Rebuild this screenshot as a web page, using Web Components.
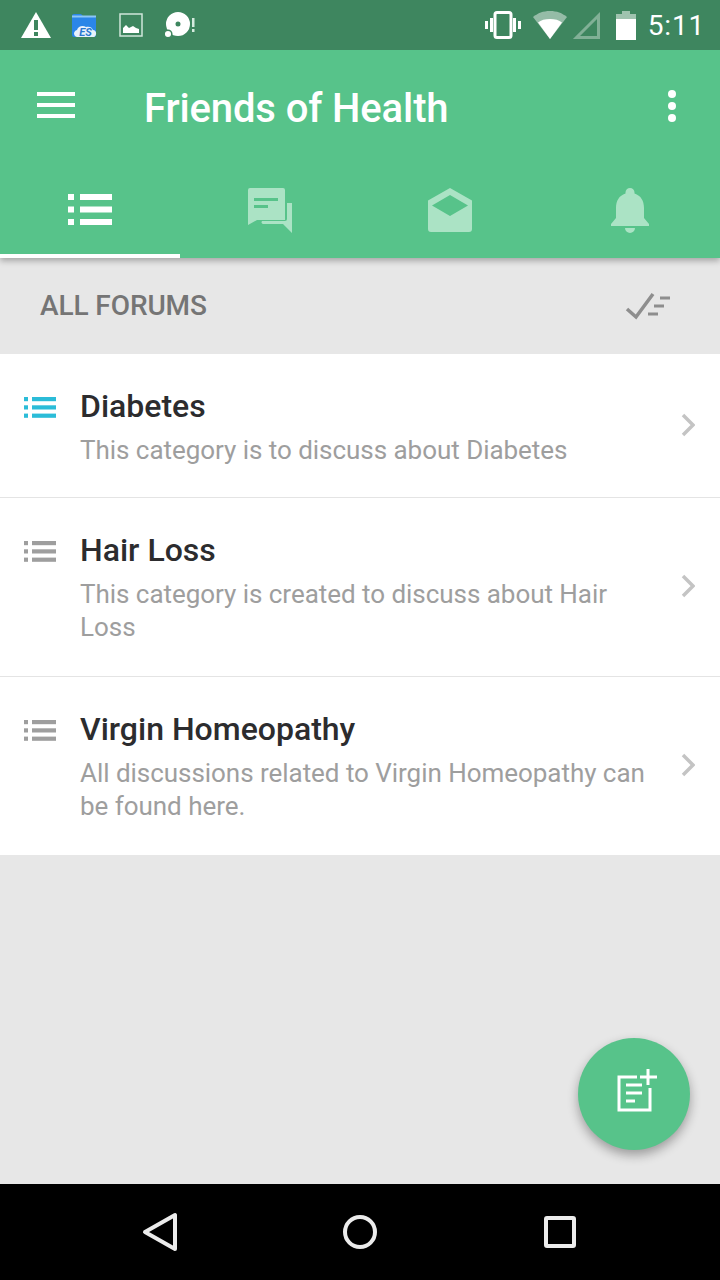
<!DOCTYPE html>
<html><head><meta charset="utf-8"><title>Friends of Health</title>
<style>html,body{margin:0;padding:0;background:#e7e7e7}body{font-family:Roboto,"Liberation Sans",sans-serif}</style>
</head><body>
<x-app></x-app>
<script>
function def(name, css, html){
  customElements.define(name, class extends HTMLElement{
    connectedCallback(){
      if(this.shadowRoot) return;
      const r=this.attachShadow({mode:'open'});
      const t=document.createElement('template');
      t.innerHTML='<style>'+css+'</style>'+(typeof html==='function'?html(this):html);
      r.appendChild(t.content.cloneNode(true));
    }
  });
}
const tabList=`<svg width="44" height="31" viewBox="0 0 44 31" fill="#fff"><rect width="6" height="6"/><rect y="12.500" width="6" height="6"/><rect y="25" width="6" height="6"/><rect x="12" width="32" height="6"/><rect x="12" y="12.500" width="32" height="6"/><rect x="12" y="25" width="32" height="6"/></svg>`;
const rowList=c=>`<svg width="32" height="21" viewBox="0 0 32 21" fill="${c}"><rect width="4" height="4.200"/><rect y="8.300" width="4" height="4.200"/><rect y="16.600" width="4" height="4.200"/><rect x="8" width="24" height="4.200"/><rect x="8" y="8.300" width="24" height="4.200"/><rect x="8" y="16.600" width="24" height="4.200"/></svg>`;

def('x-status-bar',`:host{display:flex;align-items:center;height:50px;background:#3e865f;color:#fff;font:400 28px Roboto,sans-serif}
.l{display:flex;align-items:center;margin-left:20px}.r{display:flex;align-items:center;margin-left:auto;margin-right:15px}svg{display:block}
.t{margin-left:12px;letter-spacing:.8px;line-height:50px;position:relative;top:1px}`,`
<div class="l">
<svg width="32" height="28" viewBox="0 0 32 28"><path fill="#fff" d="M16 1 31 27H1Z"/><rect x="14" y="9" width="4" height="10" fill="#3e865f"/><rect x="14" y="21" width="4" height="4" fill="#3e865f"/></svg>
<svg style="margin-left:19px" width="26" height="26" viewBox="0 0 26 26"><path fill="#2a86e8" d="M1 4a2 2 0 0 1 2-2h7l2 2h11a2 2 0 0 1 2 2v17a2 2 0 0 1-2 2H3a2 2 0 0 1-2-2Z"/><rect x="1" y="3.500" width="24" height="2" fill="#8cc6f5"/><path fill="#e8f2fb" d="M6 25c-4-1-4-6 0-7 1-4 6-5 9-3 3-1 6 0 7 3 4 0 4 6 1 7Z"/><text x="14.500" y="24" text-anchor="middle" font-family="Roboto,sans-serif" font-weight="700" font-style="italic" font-size="11" fill="#2a78d0">ES</text></svg>
<svg style="margin-left:22px" width="24" height="24" viewBox="0 0 24 24"><rect x="1" y="1" width="22" height="22" fill="none" stroke="#cfe6da" stroke-width="1.500"/><path fill="#fff" d="M4 20v-5l3-3 3 3 4-2 3 2 3 1v4Z"/></svg>
<svg style="margin-left:21px" width="32" height="26" viewBox="0 0 32 26"><path fill="#fff" fill-rule="evenodd" d="M14 0a12 12 0 1 1 0 24 12 12 0 0 1 0-24Zm0 9.500a2.500 2.500 0 1 0 0 5 2.500 2.500 0 0 0 0-5Z"/><circle cx="4" cy="22" r="3.800" fill="#fff" stroke="#3e865f" stroke-width="1.500"/><rect x="28" y="6" width="2.500" height="9" fill="#d5ebdf"/><rect x="28" y="17" width="2.500" height="3" fill="#d5ebdf"/></svg>
</div>
<div class="r">
<svg width="36" height="28" viewBox="0 0 36 28"><rect x="10" y="1.500" width="16" height="25" rx="2" fill="none" stroke="#fff" stroke-width="3"/><rect x="5" y="7" width="3" height="14" fill="#fff"/><rect x="28" y="7" width="3" height="14" fill="#fff"/><rect x="0" y="10" width="3" height="8" fill="#fff"/><rect x="33" y="10" width="3" height="8" fill="#fff"/></svg>
<svg style="margin-left:12px" width="34" height="28" viewBox="0 0 34 28"><path fill="#fff" fill-opacity=".45" d="M17 0C10 0 5 2 0 6l17 22L34 6C29 2 24 0 17 0Z"/><path fill="#fff" d="M5 11.500C8 9 12 8 17 8s9 1 12 3.500L17 28Z"/></svg>
<svg style="margin-left:5px" width="28" height="28" viewBox="0 0 28 28"><path fill="none" stroke="#fff" stroke-opacity=".35" stroke-width="3" d="M26.500 4.500V26.500H4.500Z"/></svg>
<svg style="margin-left:16px" width="20" height="29" viewBox="0 0 20 29"><path fill="#fff" fill-opacity=".5" d="M6 0h8v3h6v6H0V3h6Z"/><rect y="8" width="20" height="21" fill="#fff"/></svg>
<span class="t">5:11</span>
</div>`);

def('x-app-bar',`:host{display:flex;align-items:flex-start;height:115px;background:#57c38a;color:#fff}
.m{width:38px;margin:42px 0 0 37px;display:flex;flex-direction:column;gap:7px}.m i{display:block;height:4px;background:#fff}
.t{margin-left:69px;margin-top:34px;font:500 40px/50px Roboto,sans-serif;letter-spacing:-.12px;white-space:nowrap}
.d{margin-left:auto;margin-right:44px;margin-top:40px;display:flex;flex-direction:column;gap:4px}.d i{display:block;width:8px;height:8px;border-radius:50%;background:#fff}`,
`<div class="m"><i></i><i></i><i></i></div><div class="t">Friends of Health</div><div class="d"><i></i><i></i><i></i></div>`);

def('x-tabs',`:host{display:flex;height:93px;background:#57c38a;position:relative;z-index:2;box-shadow:0 3px 6px rgba(0,0,0,.28);clip-path:inset(0 0 -20px 0)}
.tab{flex:1;display:flex;justify-content:center;padding-top:23px;box-sizing:border-box;border-bottom:4px solid transparent}.tab.on{border-bottom-color:#fff}svg{display:block}`,
`<div class="tab on" style="padding-top:29px">${tabList}</div>
<div class="tab"><svg width="46" height="46" viewBox="0 0 46 46"><path fill="#abe3c5" d="M1 2a2 2 0 0 1 2-2h33a2 2 0 0 1 2 2v30H10l-9 5Z"/><path fill="#57c38a" d="M7 10h24v3H7ZM7 17h14v3H7Z"/><path fill="#abe3c5" d="M40 15h5v30l-9-9H16a2 2 0 0 1-1-3h23a2 2 0 0 0 2-2Z"/></svg></div>
<div class="tab"><svg width="44" height="44" viewBox="0 0 44 44"><path fill="#abe3c5" fill-rule="evenodd" d="M22 0 44 12.500V41a3 3 0 0 1-3 3H3a3 3 0 0 1-3-3V12.500ZM22 7 4 17.500 22 28 40 17.500Z"/></svg></div>
<div class="tab"><svg width="38" height="46" viewBox="0 0 38 46"><path fill="#abe3c5" d="M19 0a4.500 4.500 0 0 1 4.500 4.500v1C30 7.500 33 13 33 20v10l5 6v2H0v-2l5-6V20c0-7 3-12.500 9.500-14.500v-1A4.500 4.500 0 0 1 19 0ZM14 40h10a5 5 0 0 1-10 0Z"/></svg></div>`);

def('x-forum-header',`:host{display:flex;align-items:center;justify-content:space-between;height:96px;background:#e7e7e7;padding:0 50px 2px 40px;box-sizing:border-box;color:#757575;font:500 28px Roboto,sans-serif;letter-spacing:-.1px}
svg{display:block;margin-top:2px}`,
`<span>ALL FORUMS</span><svg width="46" height="28" viewBox="0 0 46 28" fill="none" stroke="#8e8e8e" stroke-width="3"><path d="M3 17 12 25 29 2" stroke-width="3.500"/><path d="M36 6H46M30 14H40M24 22H34"/></svg>`);

def('x-forum-row',`:host{display:flex;background:#fff;box-sizing:border-box;border-bottom:1px solid #e4e4e4;padding:33px 24px 32px 24px;position:relative}
:host([last]){border-bottom:0}
:host([active]){padding-bottom:30px}
.i{width:56px;flex:none;padding-top:10px}.i svg{display:block}
.b{flex:1;min-width:0;padding-right:43px}
.h{font:500 32px/38px Roboto,sans-serif;color:#2c2c2e}
.p{font:400 26px/33px Roboto,sans-serif;color:#9e9e9e;margin-top:9px;letter-spacing:-.04px}
.c{position:absolute;right:25px;top:50%;margin-top:-13px}`,
h=>`<div class="i">${rowList(h.hasAttribute('active')?'#2bbcd8':'#9e9e9e')}</div><div class="b"><div class="h"><slot name="title"></slot></div><div class="p"><slot></slot></div></div>
<svg class="c" width="14" height="24" viewBox="0 0 14 24" fill="none" stroke="#c4c4c4" stroke-width="3.500"><path d="M2 2 12 12 2 22"/></svg>`);

def('x-fab',`:host{display:flex;align-items:center;justify-content:center;position:absolute;right:30px;top:1038px;width:112px;height:112px;border-radius:50%;background:#57c38a;box-shadow:0 5px 11px rgba(0,0,0,.33);z-index:3}
svg{display:block;margin-top:-8px;margin-left:8px}`,
`<svg width="42" height="44" viewBox="0 0 42 44" fill="none" stroke="#fff" stroke-width="3"><path d="M20 9H2V42H33V20"/><path d="M31 1V17M23 9H40"/><path d="M9 17H25M9 25H25M9 33H18"/></svg>`);

def('x-nav-bar',`:host{display:flex;height:96px;background:#000;align-items:center;justify-content:center}
.c{width:200px;display:flex;justify-content:center}svg{display:block}`,
`<div class="c"><svg width="36" height="40" viewBox="0 0 36 40" fill="none" stroke="#ececec" stroke-width="4" stroke-linejoin="round"><path d="M33 3V37L3 20Z"/></svg></div>
<div class="c"><svg width="36" height="36" viewBox="0 0 36 36" fill="none" stroke="#ececec" stroke-width="4"><circle cx="18" cy="18" r="15"/></svg></div>
<div class="c"><svg width="32" height="32" viewBox="0 0 32 32" fill="none" stroke="#ececec" stroke-width="4" stroke-linejoin="round"><rect x="2" y="2" width="28" height="28" rx="1"/></svg></div>`);

def('x-app',`:host{display:flex;flex-direction:column;width:720px;height:1280px;position:relative;overflow:hidden;background:#e7e7e7;font-family:Roboto,sans-serif}
.s{flex:1}`,
`<x-status-bar></x-status-bar><x-app-bar></x-app-bar><x-tabs></x-tabs><x-forum-header></x-forum-header>
<x-forum-row active><span slot="title">Diabetes</span>This category is to discuss about Diabetes</x-forum-row>
<x-forum-row><span slot="title">Hair Loss</span>This category is created to discuss about Hair Loss</x-forum-row>
<x-forum-row last><span slot="title">Virgin Homeopathy</span>All discussions related to Virgin Homeopathy can be found here.</x-forum-row>
<div class="s"></div><x-fab></x-fab><x-nav-bar></x-nav-bar>`);
</script>
</body></html>
